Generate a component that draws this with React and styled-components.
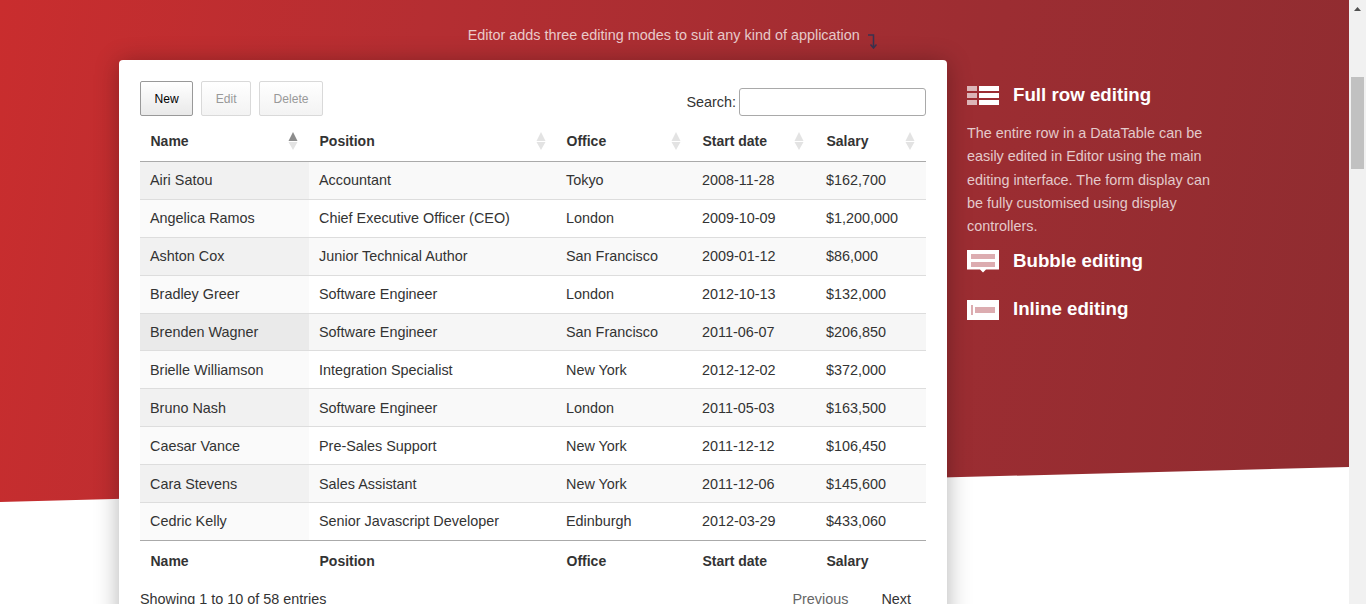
import styled, { createGlobalStyle } from "styled-components";

const GlobalStyle = createGlobalStyle`
  html, body { margin: 0; padding: 0; height: 100%; overflow: hidden; background: #fff; }
  body { font-family: "Liberation Sans", Arial, sans-serif; font-size: 14.4px; color: #333; }
`;

const Page = styled.div`
  display: flex;
  height: 604px;
  overflow: hidden;
`;

const Main = styled.div`
  position: relative;
  flex: 1;
  min-width: 0;
  overflow: hidden;
`;

const Hero = styled.div`
  position: absolute;
  top: 0;
  left: 0;
  right: 0;
  height: 502px;
  background: linear-gradient(100deg, #c92d2e 0%, #b52e32 30%, #9c2d32 70%, #8f2c30 100%);
  clip-path: polygon(0 0, 100% 0, 100% 467px, 0 502px);
`;

const Content = styled.div`
  position: relative;
  padding-top: 26px;
`;

const Intro = styled.div`
  display: flex;
  justify-content: center;
  align-items: flex-start;
  height: 34px;
  padding-right: 4px;
  font-size: 14.4px;
  line-height: 18px;
  color: rgba(255, 255, 255, 0.75);
`;

const DownArrow = styled.svg`
  width: 10px;
  height: 15px;
  margin: 8px 0 0 7.5px;
  flex: none;
`;

const Columns = styled.div`
  display: flex;
  align-items: flex-start;
  padding-left: 119px;
`;

const Card = styled.div`
  width: 828px;
  height: 600px;
  flex: none;
  box-sizing: border-box;
  padding: 21px 21px 0;
  background: #fff;
  border-radius: 4px;
  box-shadow: 0 2px 24px rgba(0, 0, 0, 0.3);
`;

const Toolbar = styled.div`
  display: flex;
  justify-content: space-between;
  align-items: flex-end;
  height: 35px;
`;

const Buttons = styled.div`
  display: flex;
  gap: 8px;
`;

const Button = styled.button`
  height: 35px;
  box-sizing: border-box;
  padding: 0 13.5px;
  font: 12.1px "Liberation Sans", Arial, sans-serif;
  border-radius: 2px;
  border: 1px solid ${(p) => (p.disabled ? "#d9d9d9" : "#999")};
  color: ${(p) => (p.disabled ? "#999" : "#000")};
  background: ${(p) => (p.disabled ? "linear-gradient(#fff, #f3f3f3)" : "linear-gradient(#fff, #e9e9e9)")};
`;

const Search = styled.label`
  display: flex;
  align-items: center;
  gap: 3px;
`;

const SearchInput = styled.input`
  width: 187px;
  height: 28px;
  box-sizing: border-box;
  border: 1px solid #a9a9a9;
  border-radius: 3px;
  background: #fff;
  padding: 1px 4px;
`;

const Table = styled.table`
  width: 786px;
  margin-top: 8px;
  border-collapse: separate;
  border-spacing: 0;
  table-layout: fixed;
  font-size: 14.4px;
`;

const HeadCell = styled.th`
  position: relative;
  height: 38px;
  padding: 0 10px 4px 10.5px;
  box-sizing: border-box;
  text-align: left;
  font-size: 14px;
  font-weight: bold;
  color: #333;
  border-bottom: 1px solid #aaa;
`;

const FootCell = styled.th`
  height: 40px;
  padding: 0 10px 0 10.5px;
  box-sizing: border-box;
  text-align: left;
  font-size: 14px;
  font-weight: bold;
  color: #333;
`;

const SortIcon = styled.svg`
  position: absolute;
  right: ${(p) => p.$right}px;
  top: 8px;
  width: 10px;
  height: 18px;
`;

const Row = styled.tr`
  height: 37.9px;
`;

const rowBg = (p) => {
  if (p.$hover) return p.$sorted ? "#eaeaea" : "#f6f6f6";
  if (p.$odd) return p.$sorted ? "#f1f1f1" : "#f9f9f9";
  return p.$sorted ? "#fafafa" : "#fff";
};

const Cell = styled.td`
  padding: 0 10px;
  box-sizing: border-box;
  white-space: nowrap;
  color: #333;
  background: ${rowBg};
  border-bottom: 1px solid ${(p) => (p.$last ? "#aaa" : "#ddd")};
`;

const Info = styled.div`
  display: flex;
  justify-content: space-between;
  margin-top: 8px;
  line-height: 20px;
`;

const Pager = styled.div`
  display: flex;
  gap: 33px;
  padding-right: 15px;
`;

const PageLink = styled.span`
  color: ${(p) => (p.$off ? "#666" : "#333")};
`;

const Side = styled.div`
  width: 245px;
  margin-left: 20px;
  padding-top: 24px;
  flex: none;
  color: #fff;
`;

const Feature = styled.div`
  display: flex;
  align-items: center;
  gap: 14px;
  height: 22px;
  margin-bottom: ${(p) => p.$gap}px;
`;

const FeatureTitle = styled.div`
  font-size: 18.72px;
  font-weight: bold;
  line-height: 22px;
`;

const FeatureIcon = styled.svg`
  width: 32px;
  height: 24px;
  flex: none;
`;

const Copy = styled.p`
  margin: 0.3px 0 11.7px;
  font-size: 14.4px;
  line-height: 23.3px;
  color: rgba(255, 255, 255, 0.75);
`;

const Scrollbar = styled.div`
  width: 17px;
  flex: none;
  box-sizing: border-box;
  padding: 7px 2px 0;
  background: #f1f1f1;
`;

const ScrollArrow = styled.svg`
  display: block;
  width: 7px;
  height: 4px;
  margin: 0 auto 66px;
`;

const ScrollThumb = styled.div`
  height: 92px;
  background: #c1c1c1;
`;

const columns = [
  { label: "Name", width: 169, sort: 11 },
  { label: "Position", width: 247, sort: 10 },
  { label: "Office", width: 136, sort: 11 },
  { label: "Start date", width: 124, sort: 12 },
  { label: "Salary", width: 110, sort: 11 },
];

const people = [
  ["Airi Satou", "Accountant", "Tokyo", "2008-11-28", "$162,700"],
  ["Angelica Ramos", "Chief Executive Officer (CEO)", "London", "2009-10-09", "$1,200,000"],
  ["Ashton Cox", "Junior Technical Author", "San Francisco", "2009-01-12", "$86,000"],
  ["Bradley Greer", "Software Engineer", "London", "2012-10-13", "$132,000"],
  ["Brenden Wagner", "Software Engineer", "San Francisco", "2011-06-07", "$206,850"],
  ["Brielle Williamson", "Integration Specialist", "New York", "2012-12-02", "$372,000"],
  ["Bruno Nash", "Software Engineer", "London", "2011-05-03", "$163,500"],
  ["Caesar Vance", "Pre-Sales Support", "New York", "2011-12-12", "$106,450"],
  ["Cara Stevens", "Sales Assistant", "New York", "2011-12-06", "$145,600"],
  ["Cedric Kelly", "Senior Javascript Developer", "Edinburgh", "2012-03-29", "$433,060"],
];

const Sort = ({ right, active }) => (
  <SortIcon $right={right} viewBox="0 0 10 18">
    <path d="M5 0 L9.5 9 H0.5 Z" fill={active ? "#8c8c8c" : "#e3e3e3"} />
    <path d="M5 18 L9.5 10 H0.5 Z" fill="#e3e3e3" />
  </SortIcon>
);

const FullRowIcon = () => (
  <FeatureIcon viewBox="0 0 32 24">
    <g fill="#fff" opacity="0.65">
      <rect x="0" y="3" width="10" height="5" />
      <rect x="0" y="10" width="10" height="5" />
      <rect x="0" y="17" width="10" height="5" />
    </g>
    <g fill="#fff">
      <rect x="12" y="3" width="20" height="5" />
      <rect x="12" y="10" width="20" height="5" />
      <rect x="12" y="17" width="20" height="5" />
    </g>
  </FeatureIcon>
);

const BubbleIcon = () => (
  <FeatureIcon viewBox="0 0 32 24">
    <path d="M0 1 H32 V20.5 H19 L16 23.5 L13 20.5 H0 Z" fill="#fff" />
    <rect x="4" y="5" width="24" height="5" fill="#dcacb0" />
    <rect x="4" y="13" width="24" height="5" fill="#dcacb0" />
  </FeatureIcon>
);

const InlineIcon = () => (
  <FeatureIcon viewBox="0 0 32 24">
    <rect x="0" y="3" width="32" height="20" fill="#fff" />
    <rect x="4" y="8" width="2" height="10" fill="#dcacb0" />
    <rect x="8" y="10" width="20" height="6" fill="#dcacb0" />
  </FeatureIcon>
);

const App = () => (
  <Page>
    <GlobalStyle />
    <Main>
      <Hero />
      <Content>
        <Intro>
          Editor adds three editing modes to suit any kind of application
          <DownArrow viewBox="0 0 10 15">
            <path d="M1 1 H6.5 V13.5 M3.5 10.5 L6.5 14 L9.5 10.5" fill="none" stroke="#3a3350" strokeWidth="1.5" />
          </DownArrow>
        </Intro>
        <Columns>
          <Card>
            <Toolbar>
              <Buttons>
                <Button>New</Button>
                <Button disabled>Edit</Button>
                <Button disabled>Delete</Button>
              </Buttons>
              <Search>
                Search:
                <SearchInput type="text" />
              </Search>
            </Toolbar>
            <Table>
              <colgroup>
                {columns.map((c) => (
                  <col key={c.label} width={c.width} />
                ))}
              </colgroup>
              <thead>
                <tr>
                  {columns.map((c, i) => (
                    <HeadCell key={c.label}>
                      {c.label}
                      <Sort right={c.sort} active={i === 0} />
                    </HeadCell>
                  ))}
                </tr>
              </thead>
              <tbody>
                {people.map((person, r) => (
                  <Row key={person[0]}>
                    {person.map((value, c) => (
                      <Cell
                        key={c}
                        $odd={r % 2 === 0}
                        $hover={r === 4}
                        $sorted={c === 0}
                        $last={r === people.length - 1}
                      >
                        {value}
                      </Cell>
                    ))}
                  </Row>
                ))}
              </tbody>
              <tfoot>
                <tr>
                  {columns.map((c) => (
                    <FootCell key={c.label}>{c.label}</FootCell>
                  ))}
                </tr>
              </tfoot>
            </Table>
            <Info>
              <span>Showing 1 to 10 of 58 entries</span>
              <Pager>
                <PageLink $off>Previous</PageLink>
                <PageLink>Next</PageLink>
              </Pager>
            </Info>
          </Card>
          <Side>
            <Feature $gap={16}>
              <FullRowIcon />
              <FeatureTitle>Full row editing</FeatureTitle>
            </Feature>
            <Copy>
              The entire row in a DataTable can be easily edited in Editor using the main editing interface. The form
              display can be fully customised using display controllers.
            </Copy>
            <Feature $gap={26}>
              <BubbleIcon />
              <FeatureTitle>Bubble editing</FeatureTitle>
            </Feature>
            <Feature $gap={0}>
              <InlineIcon />
              <FeatureTitle>Inline editing</FeatureTitle>
            </Feature>
          </Side>
        </Columns>
      </Content>
    </Main>
    <Scrollbar>
      <ScrollArrow viewBox="0 0 7 4">
        <path d="M3.5 0 L7 4 H0 Z" fill="#505050" />
      </ScrollArrow>
      <ScrollThumb />
    </Scrollbar>
  </Page>
);

export default App;
